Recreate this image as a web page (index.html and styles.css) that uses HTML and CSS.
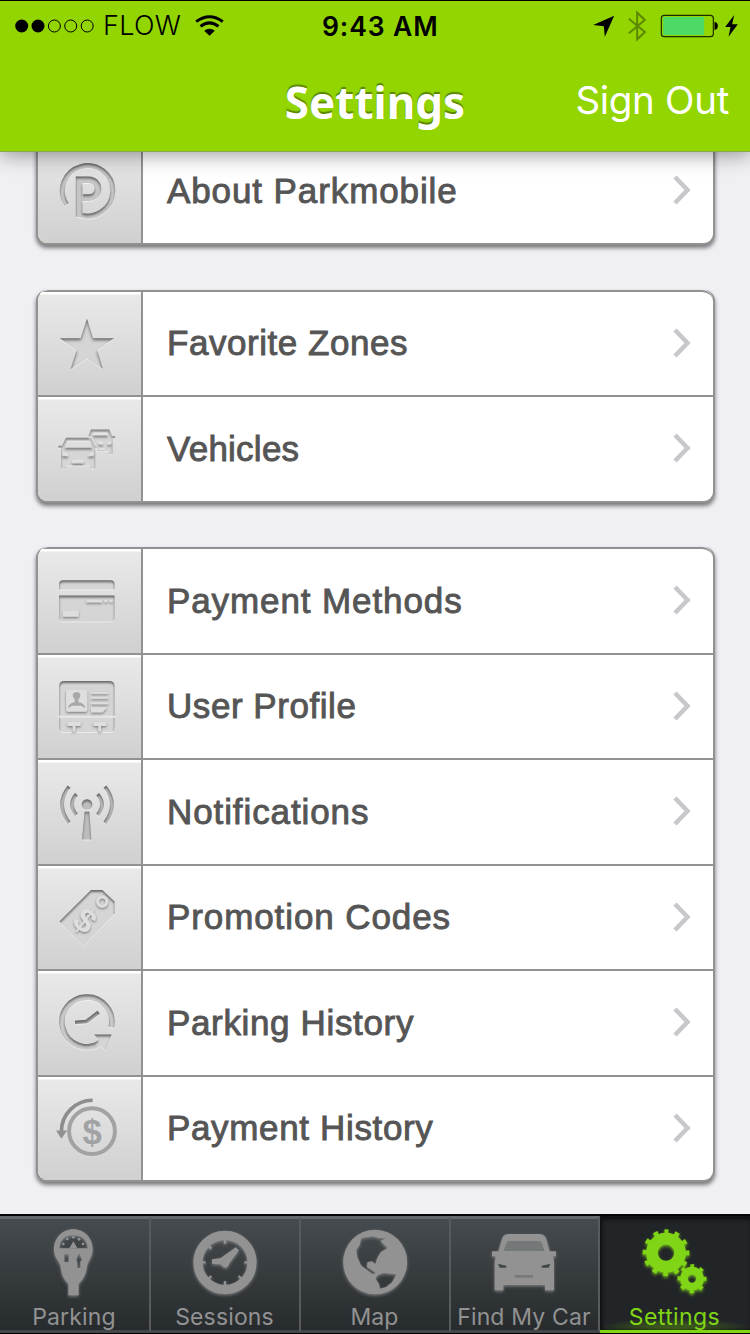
FILE: index.html
```html
<!DOCTYPE html>
<html lang="en">
<head>
<meta charset="utf-8">
<title>Settings</title>
<link rel="stylesheet" href="styles.css">
</head>
<body>
<svg class="defs" width="0" height="0" aria-hidden="true">
  <defs>
    <filter id="engrave" x="-10%" y="-10%" width="120%" height="125%" color-interpolation-filters="sRGB">
      <feOffset in="SourceAlpha" dy="7" result="o"/>
      <feGaussianBlur in="o" stdDeviation="4" result="b"/>
      <feComposite in="SourceAlpha" in2="b" operator="out" result="i"/>
      <feFlood flood-color="#555" flood-opacity=".85"/>
      <feComposite in2="i" operator="in" result="shade"/>
      <feOffset in="SourceAlpha" dy="3" result="h"/>
      <feFlood flood-color="#fff" flood-opacity=".5"/>
      <feComposite in2="h" operator="in" result="light"/>
      <feMerge><feMergeNode in="light"/><feMergeNode in="SourceGraphic"/><feMergeNode in="shade"/></feMerge>
    </filter>
    <filter id="raise" x="-20%" y="-20%" width="140%" height="140%">
      <feDropShadow dx="0" dy="4" stdDeviation="2.5" flood-color="#666" flood-opacity=".8"/>
    </filter>
    <filter id="glow" x="-20%" y="-20%" width="140%" height="140%">
      <feDropShadow dx="0" dy="4" stdDeviation="4" flood-color="#999" flood-opacity=".7"/>
    </filter>
    <filter id="greenglow" x="-20%" y="-20%" width="140%" height="140%">
      <feDropShadow dx="0" dy="5" stdDeviation="4" flood-color="#80d514" flood-opacity=".8"/>
    </filter>
  </defs>
</svg>

<header class="header">
  <div class="status">
    <svg class="signal" viewBox="0 0 80 14"><circle cx="6.7" cy="7" r="6.5"/><circle cx="23" cy="7" r="6.5"/><g fill="none" stroke="#000"><circle cx="39.4" cy="7" r="6"/><circle cx="55.7" cy="7" r="6"/><circle cx="72.2" cy="7" r="6"/></g></svg>
    <span class="carrier">FLOW</span>
    <svg class="wifi" viewBox="585 42 86 63"><g fill="none" stroke="#000" stroke-width="9"><path d="M588 62Q628 32 668 62"/><path d="M601 76Q628 55 655 76"/></g><path d="M612 89Q628 78 644 89L628 104Z"/></svg>
    <span class="time">9:43 AM</span>
    <svg class="sysicons" viewBox="652 28 440 96">
      <path d="M655 73L718 45L690 108L687 77Z"/>
      <path d="M762 54L810 94L787 116V36L810 58L762 98" fill="none" stroke="#5c8700" stroke-width="6"/>
      <rect x="859.500" y="44" width="156" height="64" rx="9" fill="none" stroke="#1c2b00" stroke-width="3.500"/>
      <rect x="865" y="49" width="123" height="54" rx="3" fill="#4cd964"/>
      <path d="M1019 64Q1029 65 1029 76T1019 88Z"/>
      <path d="M1078 43L1051 79H1067L1061 108L1089 71H1072Z"/>
    </svg>
  </div>
  <div class="navbar">
    <span></span>
    <h1 class="title">Settings</h1>
    <span class="signout">Sign Out</span>
  </div>
</header>

<main class="content">
  <section class="card card-clipped">
    <div class="row"><div class="cell"><svg viewBox="24 -32 309 311"><g class="engraved"><g fill="none" stroke="#c6c6c6"><path stroke-width="15" d="M109 166A76 76 0 1 1 147 196"/><path stroke-width="20" d="M147 203V91H177A25 25 0 0 1 177 145H158"/></g></g></svg></div><span class="label">About Parkmobile</span><svg class="chev" viewBox="0 0 20 32"><path d="M3 3L15.500 16L3 29"/></svg></div>
  </section>

  <section class="card">
    <div class="row"><div class="cell"><svg viewBox="24 36 309 309"><path class="engraved" d="M171 116L189 175H252L201 210L219 267L171 234L122 267L140 210L89 175H152Z"/></svg></div><span class="label tight">Favorite Zones</span><svg class="chev" viewBox="0 0 20 32"><path d="M3 3L15.500 16L3 29"/></svg></div>
    <div class="row"><div class="cell"><svg viewBox="24 352 309 310"><g class="engraved soft" fill-rule="evenodd"><path d="M175 470L183 450H238L246 470H255V476H248V524H236V514H204L200 498L192 486L187 474ZM188 468H235L230 459H192ZM206 486L219 490V495H206ZM232 490L244 486V494L232 496ZM206 507H224V512H206Z"/><path d="M85 499H96L108 475H184L195 499H206V505H196V567H181V558H107V567H93V505H85ZM104 505H187L179 484H112ZM97 518L114 524V530H97ZM175 524L191 518V530H175ZM126 542H160V552H126Z"/></g></svg></div><span class="label tighter">Vehicles</span><svg class="chev" viewBox="0 0 20 32"><path d="M3 3L15.500 16L3 29"/></svg></div>
  </section>

  <section class="card">
    <div class="row"><div class="cell"><svg viewBox="24 30 309 310"><g class="engraved" fill-rule="evenodd"><path d="M87 152V136Q87 124 99 124H242Q254 124 254 136V152Z"/><path d="M87 170H254V236Q254 248 242 248H99Q87 248 87 236Z"/></g><path class="raised" d="M169 182H216V191H169ZM223 182H232V190H223ZM239 182H248V190H239ZM98 215H146V234H98Z"/></svg></div><span class="label">Payment Methods</span><svg class="chev" viewBox="0 0 20 32"><path d="M3 3L15.500 16L3 29"/></svg></div>
    <div class="row"><div class="cell"><svg viewBox="24 346 309 310"><g class="engraved"><path d="M87 440Q87 424 103 424H238Q254 424 254 440V564Q254 578 238 578H103Q87 578 87 564Z"/></g><path class="line" d="M84 529H257V535H84Z"/><path class="raised" d="M108 458Q108 450 116 450H164Q172 450 172 458V509Q172 517 164 517H116Q108 517 108 509ZM183 457H235V463H183ZM183 472H235V478H183ZM183 488H235V494H183ZM183 503H232L218 519H183ZM112 548H152V560H136V576H128V560H112ZM190 548H229V560H213V576H205V560H190Z"/><path class="person" d="M113 506Q117 489 134 488V480Q127 474 128 465Q130 457 140 457T151 465Q152 475 145 480V488Q163 490 166 506L153 499H126Z"/></svg></div><span class="label tight">User Profile</span><svg class="chev" viewBox="0 0 20 32"><path d="M3 3L15.500 16L3 29"/></svg></div>
    <div class="row"><div class="cell"><svg viewBox="24 17 309 310"><g class="engraved dark"><g fill="none" stroke="#bdbdbd" stroke-width="11"><path d="M117 97Q75 150 117 206M225 97Q267 150 225 206M139 120Q113 151 139 182M203 120Q229 151 203 182"/></g><circle cx="171" cy="151" r="16"/><path d="M164 172H178L184 256H156Z"/></g></svg></div><span class="label">Notifications</span><svg class="chev" viewBox="0 0 20 32"><path d="M3 3L15.500 16L3 29"/></svg></div>
    <div class="row"><div class="cell"><svg viewBox="24 333 309 310"><path class="engraved" d="M183 405H217L254 440V475L160 572L88 500Z"/><g class="raised"><circle cx="217" cy="440" r="14" fill="none" stroke="#dedede" stroke-width="9"/><text x="0" y="36" font-size="102" transform="translate(166 496) rotate(38)">$</text></g></svg></div><span class="label">Promotion Codes</span><svg class="chev" viewBox="0 0 20 32"><path d="M3 3L15.500 16L3 29"/></svg></div>
    <div class="row"><div class="cell"><svg viewBox="24 19 309 310"><g class="engraved"><path fill="none" stroke="#cacaca" stroke-width="17" d="M244 188A75 75 0 1 0 207 238"/><path d="M193 210H245L226 257L212 242L198 248V232L205 227Z"/><path fill="none" stroke="#aaa" stroke-width="11" d="M135 174L170 171L206 143"/></g></svg></div><span class="label snug">Parking History</span><svg class="chev" viewBox="0 0 20 32"><path d="M3 3L15.500 16L3 29"/></svg></div>
    <div class="row"><div class="cell"><svg class="flat" viewBox="24 337 309 310"><circle cx="186" cy="500" r="69" fill="none" stroke="#a0a2a4" stroke-width="12"/><path d="M188 407A94 94 0 0 0 94 501" fill="none" stroke="#8d8d8d" stroke-width="11"/><path class="head" d="M78 498H111L94 523Z"/><text class="dollar" x="186" y="538">$</text></svg></div><span class="label snug">Payment History</span><svg class="chev" viewBox="0 0 20 32"><path d="M3 3L15.500 16L3 29"/></svg></div>
  </section>
</main>

<nav class="tabs">
  <div class="tab"><svg viewBox="0 42 450 240"><g class="icon" fill-rule="evenodd"><path d="M223 73C258 73 281 100 281 134C281 152 271 162 265 180C260 210 257 218 239 236V271H208V236C190 218 188 208 184 180C175 162 165 152 165 134C165 100 188 73 223 73ZM181 130H266Q262 91 223 91T181 130ZM196 148V171H209V148ZM240 144L231 165L235 170V188H244V170L249 165Z"/></g><g fill="#929292"><path d="M211 130L223 109L235 130Z"/><circle cx="193" cy="117" r="4"/><circle cx="205" cy="102" r="4"/><circle cx="223" cy="97" r="4"/><circle cx="240" cy="103" r="4"/><circle cx="252" cy="117" r="4"/></g></svg><span>Parking</span></div>
  <div class="tab"><svg viewBox="450 42 450 240"><g class="icon"><circle cx="675" cy="172" r="81" fill="none" stroke="#929292" stroke-width="28"/><path d="M675 101V116M675 228V244M604 172H617M733 172H747M625 122L634 131M725 222L716 213M625 222L634 213" fill="none" stroke="#929292" stroke-width="7"/><path d="M636 163L662 159L707 127L717 136L688 175Q683 192 672 187L661 178L636 176Z"/></g></svg><span>Sessions</span></div>
  <div class="tab"><svg viewBox="0 42 450 240"><g class="icon" fill-rule="evenodd"><path d="M226 74A96 97 0 1 1 225 268A96 97 0 1 1 226 74ZM184 99L218 94L238 99L258 100L241 108L263 129L243 140L232 158L226 177L216 169L202 172L201 186L216 195L228 205L218 207L198 193L183 181L172 156L169 135L179 119ZM232 211L250 204L289 208L276 232L258 246L240 251L237 236L227 222Z"/></g></svg><span>Map</span></div>
  <div class="tab"><svg viewBox="450 42 450 240"><g class="icon"><path d="M579 139H598L609 102Q613 87 630 87H720Q737 87 742 102L752 139H771V154H762L765 170V256H738V240H613V256H587V170L590 154H579Z"/></g><path d="M614 138L622 115Q624 108 633 108H718Q727 108 729 115L736 138Z" fill="#747879"/><path d="M597 176L622 182V188H602ZM754 176L728 182V188H749Z" fill="#414648"/><rect x="647" y="210" width="55" height="8" fill="#77797a"/></svg><span>Find My Car</span></div>
  <div class="tab active"><svg viewBox="30 42 450 240"><g class="icon green"><circle cx="228" cy="143" r="42" fill="none" stroke="#80d514" stroke-width="35"/><circle cx="228" cy="143" r="62" fill="none" stroke="#80d514" stroke-width="16" stroke-dasharray="14 18.463" stroke-dashoffset="7" transform="rotate(-90 228 143)"/><circle cx="306" cy="221" r="24" fill="none" stroke="#80d514" stroke-width="23"/><circle cx="306" cy="221" r="37" fill="none" stroke="#80d514" stroke-width="13" stroke-dasharray="12 17.060" stroke-dashoffset="6" transform="rotate(-90 306 221)"/></g></svg><span>Settings</span></div>
</nav>
</body>
</html>
```

FILE: styles.css
```css
* { box-sizing: border-box; }
body { margin: 0; width: 750px; height: 1334px; overflow: hidden; display: flex; flex-direction: column; background: #efeff4; font-family: Inter, "Liberation Sans", sans-serif; }
svg { display: block; flex: none; }
.defs { position: absolute; }
.header { position: relative; z-index: 2; height: 152px; flex: none; background: #92d500; border-top: 1px solid #000; border-bottom: 1px solid #8aa64e; box-shadow: 0 2px 20px rgba(0,0,0,.42); }
.status { height: 49px; display: flex; align-items: center; padding-left: 15px; white-space: nowrap; }
.signal { width: 80px; height: 14px; }
.carrier { width: 80px; margin-left: 8px; font-size: 27px; font-weight: 300; line-height: 48px; letter-spacing: .3px; }
.wifi { width: 29px; height: 21px; margin-left: 12px; }
.time { width: 118px; margin-left: 98px; font-size: 26.500px; font-weight: 600; line-height: 48px; letter-spacing: .9px; }
.sysicons { width: 147px; height: 32px; margin-left: 152px; }
.navbar { height: 102px; display: grid; grid-template-columns: 200px 350px 200px; align-items: center; color: #fff; white-space: nowrap; }
.title { margin: 2px 0 0; text-align: center; font: 700 44px/60px "Noto Sans", sans-serif; text-shadow: 0 -2px 1px rgba(70,105,0,.75); }
.signout { justify-self: end; margin-top: -2px; padding-right: 21px; font-size: 38.500px; font-weight: 400; letter-spacing: -.3px; }
.content { flex: 1; min-height: 0; overflow: hidden; padding: 0 35px 0 36px; display: flex; flex-direction: column; gap: 44.500px; }
.card { flex: none; border: 2px solid #929292; border-top: 0; border-radius: 11px; overflow: hidden; background: #fff; box-shadow: 0 3px 4px rgba(0,0,0,.5); }
.card-clipped { margin: -15px 0 .5px; }
.row { height: 105.500px; border-top: 2px solid #929292; display: flex; align-items: center; }
.card .row:first-child { border-radius: 11px 11px 0 0; }
.cell { width: 105px; height: 100%; border-right: 2px solid #929292; background: linear-gradient(#fff 0, #fff 2px, #e9e9e9 3px, #d0d0d0 100%); }
.cell svg { width: 103px; height: 103px; }
.cell path, .cell circle { fill: #d5d5d5; }
.cell path[fill="none"], .cell circle[fill="none"], .cell g[fill="none"] path { fill: none; }
.engraved { filter: url(#engrave); }
.engraved.soft { opacity: .8; }
.engraved.dark circle, .engraved.dark > path { fill: #bdbdbd; }
.raised { filter: url(#raise); fill: #dedede; font-family: "Liberation Sans", sans-serif; font-weight: 700; text-anchor: middle; }
.cell .raised { fill: #dedede; }
.cell .line { fill: #e6e6e6; }
.cell .person { fill: #a8a8a8; }
.flat .head { fill: #919191; }
.dollar { font: 700 104px "Liberation Sans", sans-serif; fill: #a0a2a4; text-anchor: middle; }
.label { flex: 1; padding-left: 24px; color: #555; font: 35px/40px "Liberation Sans", Arial, sans-serif; -webkit-text-stroke: .9px #555; letter-spacing: .9px; white-space: nowrap; }
.label.snug { letter-spacing: .65px; }
.label.tight { letter-spacing: .55px; }
.label.tighter { letter-spacing: .25px; }
.chev { width: 20px; height: 32px; margin: -1px 21px 0 0; }
.chev path { fill: none; stroke: #c7c7cc; stroke-width: 4.500px; }
.tabs { height: 120.500px; flex: none; display: grid; grid-template-columns: 151px 150px 150px 149px 150px; border-top: 2px solid #050506; border-bottom: 1px solid #000; background: #2b2f32; }
.tab { border-top: 3px solid #64686b; border-right: 2px solid #575b5e; border-bottom: 3px solid #44484a; background: linear-gradient(#464b4f, #272b2d); display: flex; flex-direction: column; align-items: center; color: #929292; font-size: 23px; line-height: 28px; letter-spacing: .15px; white-space: nowrap; }
.tab svg { width: 150px; height: 80px; }
.tab svg, .tab span { margin-right: 1px; }
.tab span { margin-top: 4px; height: 27px; }
.active { border-top-color: #111314; border-right: 0; border-bottom-color: #80d514; background: radial-gradient(ellipse 80px 12px at 50% 100%, #4e7a19, rgba(78,122,25,0)), #222528; box-shadow: inset 2px 0 4px #0c0d0e; color: #80d514; letter-spacing: .4px; }
.icon { filter: url(#glow); fill: #929292; }
.icon.green { filter: url(#greenglow); }
```
